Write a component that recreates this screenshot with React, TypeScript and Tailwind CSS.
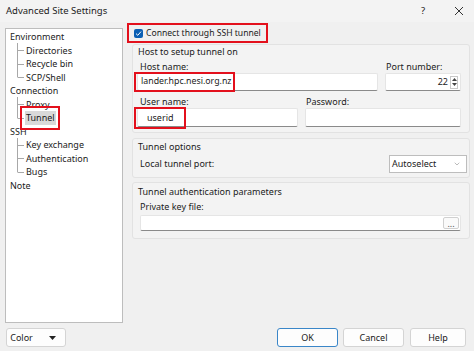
import { ChevronDown } from "lucide-react";

const tree: { label: string; child?: boolean; last?: boolean; selected?: boolean }[] = [
	{ label: "Environment" },
	{ label: "Directories", child: true },
	{ label: "Recycle bin", child: true },
	{ label: "SCP/Shell", child: true, last: true },
	{ label: "Connection" },
	{ label: "Proxy", child: true },
	{ label: "Tunnel", child: true, last: true, selected: true },
	{ label: "SSH" },
	{ label: "Key exchange", child: true },
	{ label: "Authentication", child: true },
	{ label: "Bugs", child: true, last: true },
	{ label: "Note" },
];

function TreeRow({ label, child, last, selected }: (typeof tree)[number]) {
	if (!child) {
		return <div className="h-[13.5px] leading-[13.5px] pl-[4px]">{label}</div>;
	}
	return (
		<div className="h-[13.5px] leading-[13.5px] flex items-center">
			<svg width="19" height="14" className="shrink-0">
				<line x1="11.5" y1="0" x2="11.5" y2={last ? 7 : 14} stroke="#a8a8a8" />
				<line x1="11.5" y1="7.5" x2="18" y2="7.5" stroke="#a8a8a8" />
			</svg>
			<span className={`relative px-[1px] ${selected ? "bg-[#d9d9d9]" : ""}`}>
				{label}
				{selected && (
					<span className="absolute left-[-5px] right-[-4px] top-[-5px] bottom-[-5px] border-2 border-[#e3101c]" />
				)}
			</span>
		</div>
	);
}

function Input({ value, width, className = "" }: { value?: string; width: string; className?: string }) {
	return (
		<div
			className={`${width} h-full bg-white border border-[#e5e5e5] border-b-[#8a8a8a] rounded-[2px] flex items-center px-[3px] ${className}`}
		>
			{value}
		</div>
	);
}

function Button({ children, primary }: { children: React.ReactNode; primary?: boolean }) {
	return (
		<div
			className={`h-full bg-[#fdfdfd] rounded-[3px] border flex items-center justify-center ${
				primary ? "border-[#3a86c8]" : "border-[#d4d4d4]"
			}`}
		>
			{children}
		</div>
	);
}

export default function App() {
	return (
		<div
			className="w-[474px] h-[351px] bg-[#f0f0f0] text-[#1b1b1b] text-[9px] overflow-hidden flex flex-col"
			style={{ fontFamily: '"Noto Sans", "Open Sans", sans-serif' }}
		>
			<div className="h-[22px] shrink-0 bg-[#f3f3f3] flex items-center justify-between pl-[6px] text-[9.5px]">
				<span>Advanced Site Settings</span>
				<div className="flex items-center">
					<span className="w-[10px] text-center mr-[26px]">?</span>
					<svg width="10" height="10" className="mr-[10px]">
						<path d="M1 1 L9 9 M9 1 L1 9" stroke="#333" strokeWidth="1" />
					</svg>
				</div>
			</div>

			<div className="flex h-[301px] shrink-0">
				<div className="ml-[5px] mt-[6px] w-[118px] h-[295px] bg-white border border-[#bdbdbd] pt-[1px]">
					{tree.map((t) => (
						<TreeRow key={t.label} {...t} />
					))}
				</div>

				<div className="ml-[4px] w-[345px] flex flex-col">
					<div className="mt-[1px] w-[141px] h-[20px] border-2 border-[#e3101c] flex items-center pl-[5px] gap-[3px] whitespace-nowrap">
						<div className="w-[9px] h-[9px] shrink-0 rounded-[2px] bg-[#0a5fb4] flex items-center justify-center">
							<svg width="7" height="7" viewBox="0 0 7 7">
								<path d="M1 3.6 L2.8 5.3 L6 1.6" stroke="white" strokeWidth="1" fill="none" />
							</svg>
						</div>
						<span className="text-[8.6px]">Connect through SSH tunnel</span>
					</div>

					<div className="mt-[1px] ml-[5px] w-[338px] h-[89px] border border-[#e2e2e2] rounded-[3px] bg-[#f3f3f3] px-[4px]">
						<div className="h-[13px] leading-[13px] pl-[1px]">Host to setup tunnel on</div>
						<div className="mt-[3px] flex">
							<div className="w-[242px] flex flex-col">
								<div className="h-[12px] leading-[12px] pl-[3px]">Host name:</div>
								<div className="h-[18px] relative">
									<Input value="lander.hpc.nesi.org.nz" width="w-[241px]" className="text-[8.8px]" />
									<span className="absolute left-[-3px] top-[-1px] w-[101px] h-[20px] border-2 border-[#e3101c]" />
								</div>
							</div>
							<div className="ml-[6px] w-[76px] flex flex-col">
								<div className="h-[12px] leading-[12px] pl-[1px]">Port number:</div>
								<div className="h-[18px] w-[76px] bg-white border border-[#e5e5e5] border-b-[#8a8a8a] rounded-[2px] flex items-center justify-end">
									<span>22</span>
									<div className="ml-[2px] mr-[2px] w-[8px] h-[13px] border border-[#c8c8c8] flex flex-col items-center justify-around">
										<svg width="5" height="3">
											<path d="M0 3 L2.5 0 L5 3 Z" fill="#444" />
										</svg>
										<svg width="5" height="3">
											<path d="M0 0 L2.5 3 L5 0 Z" fill="#444" />
										</svg>
									</div>
								</div>
							</div>
						</div>
						<div className="mt-[5px] flex">
							<div className="w-[161px] flex flex-col">
								<div className="h-[12px] leading-[12px] pl-[3px]">User name:</div>
								<div className="h-[19px] relative">
									<Input value="userid" width="w-[161px]" className="border-b-[#3a7fc4] pl-[9px]" />
									<span className="absolute left-[-3px] top-[-1px] w-[52px] h-[22px] border-2 border-[#e3101c]" />
								</div>
							</div>
							<div className="ml-[7px] w-[156px] flex flex-col">
								<div className="h-[12px] leading-[12px] pl-[1px]">Password:</div>
								<div className="h-[19px]">
									<Input width="w-[156px]" />
								</div>
							</div>
						</div>
					</div>

					<div className="mt-[5px] ml-[5px] w-[338px] h-[40px] border border-[#e2e2e2] rounded-[3px] bg-[#f3f3f3] px-[4px] pt-[1px]">
						<div className="h-[13px] leading-[13px] pl-[1px]">Tunnel options</div>
						<div className="mt-[2px] h-[18px] flex items-center justify-between">
							<span className="pl-[3px]">Local tunnel port:</span>
							<div className="w-[78px] h-[18px] bg-white border border-[#bdbdbd] flex items-center justify-between pl-[2px] pr-[5px] mr-[-2px]">
								<span>Autoselect</span>
								<ChevronDown size={8} color="#777" strokeWidth={1.5} />
							</div>
						</div>
					</div>

					<div className="mt-[4px] ml-[5px] w-[338px] h-[57px] border border-[#e2e2e2] rounded-[3px] bg-[#f3f3f3] px-[4px] pt-[2px]">
						<div className="h-[13px] leading-[13px] pl-[1px]">Tunnel authentication parameters</div>
						<div className="mt-[3px] h-[12px] leading-[12px] pl-[3px]">Private key file:</div>
						<div className="mt-[2px] ml-[3px] w-[321px] h-[16px] bg-white border border-[#e5e5e5] border-b-[#8a8a8a] rounded-[2px] flex items-center justify-end pr-[1px]">
							<div className="w-[16px] h-[12px] bg-[#fafafa] border border-[#d0d0d0] rounded-[2px] flex items-end justify-center leading-[9px] text-[#555]">
								...
							</div>
						</div>
					</div>
				</div>
			</div>

			<div className="mt-[5px] h-[19px] flex">
				<div className="ml-[6px] w-[60px] h-full">
					<Button>
						<span className="ml-[-6px]">Color</span>
						<svg width="7" height="4" className="ml-[16px]">
							<path d="M0 0 L7 0 L3.5 4 Z" fill="#222" />
						</svg>
					</Button>
				</div>
				<div className="ml-[211px] w-[61px] h-full">
					<Button primary>OK</Button>
				</div>
				<div className="ml-[5px] w-[61px] h-full">
					<Button>Cancel</Button>
				</div>
				<div className="ml-[6px] w-[56px] h-full">
					<Button>Help</Button>
				</div>
			</div>
		</div>
	);
}
